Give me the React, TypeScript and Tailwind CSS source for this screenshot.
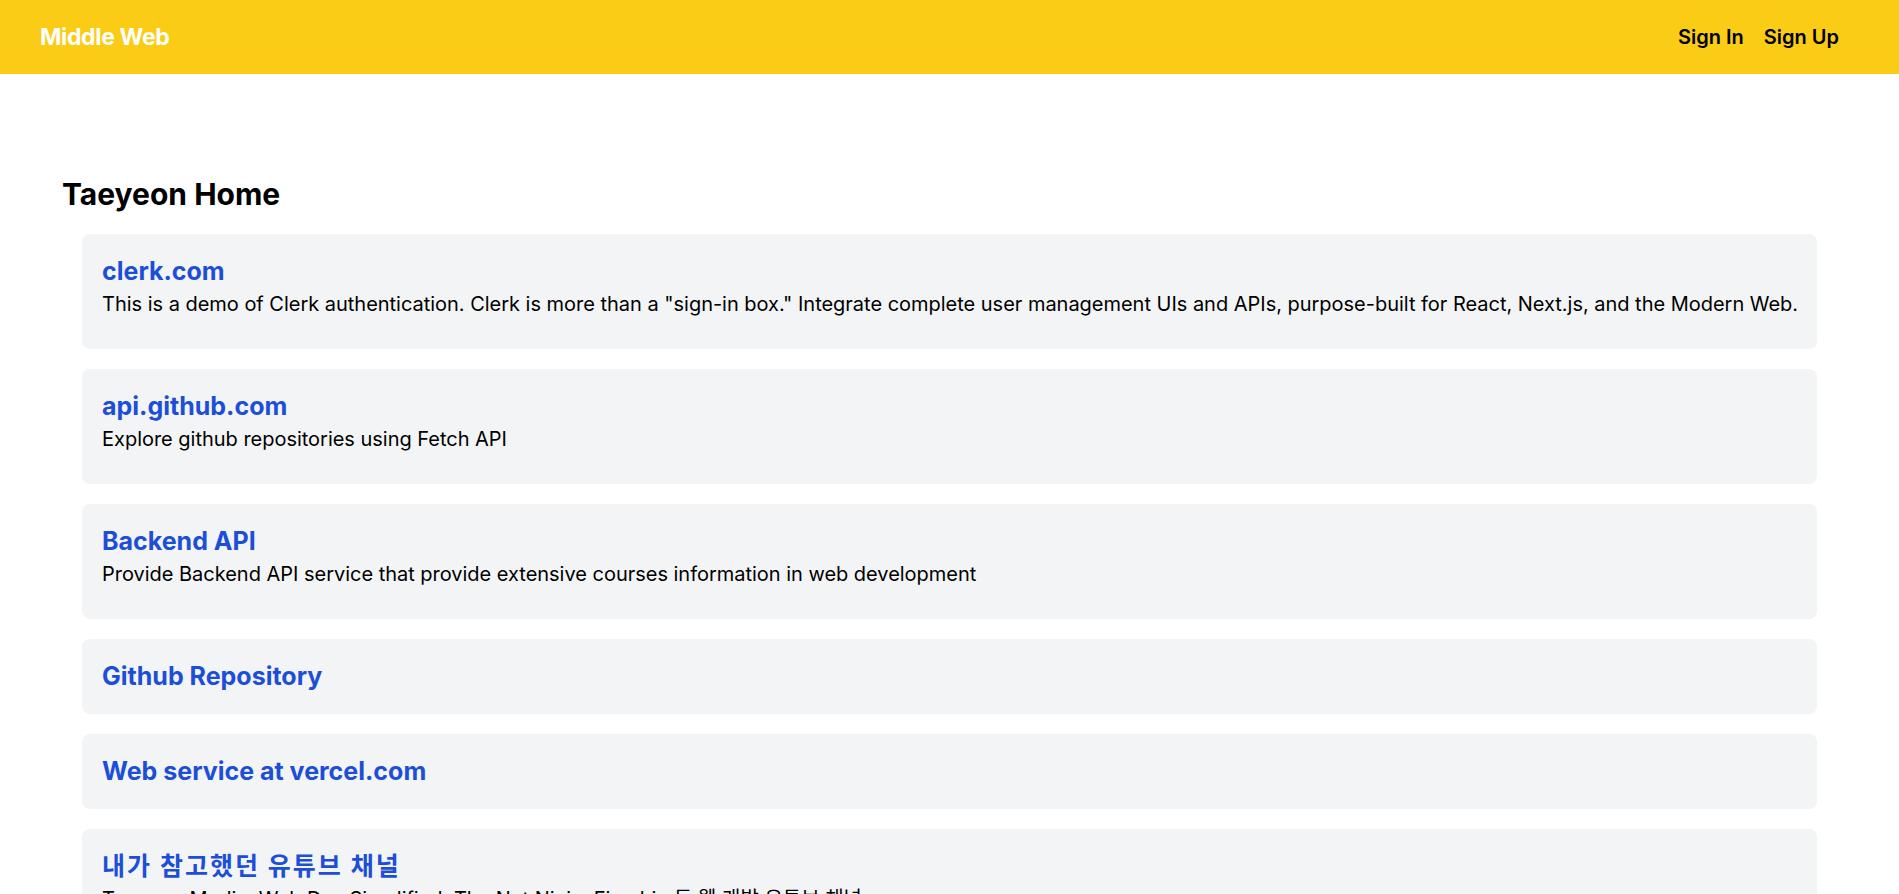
const LINKS = [
  {
    title: "clerk.com",
    desc: 'This is a demo of Clerk authentication. Clerk is more than a "sign-in box." Integrate complete user management UIs and APIs, purpose-built for React, Next.js, and the Modern Web.',
  },
  { title: "api.github.com", desc: "Explore github repositories using Fetch API" },
  {
    title: "Backend API",
    desc: "Provide Backend API service that provide extensive courses information in web development",
  },
  { title: "Github Repository" },
  { title: "Web service at vercel.com" },
  {
    title: "내가 참고했던 유튜브 채널",
    desc: "Traversy Media, Web Dev Simplified, The Net Ninja, Fireship 등 웹 개발 유튜브 채널",
    ko: true,
  },
];

export default function App() {
  return (
    <div className="min-h-screen bg-white font-['Inter','Noto_Sans_CJK_KR',sans-serif] text-black">
      <header className="flex h-[74px] items-center justify-between bg-[#facc15] pl-10 pr-[60px]">
        <a href="#" className="text-[23px] font-bold tracking-[-0.015em] text-white">
          Middle Web
        </a>
        <nav className="flex gap-5 text-xl font-semibold">
          <a href="#">Sign In</a>
          <a href="#">Sign Up</a>
        </nav>
      </header>

      <main className="pl-[62px] pr-16 pt-[102px] pb-10">
        <h1 className="text-3xl font-bold">Taeyeon Home</h1>

        <ul className="mt-[22px] flex flex-col gap-5 pl-5 pr-[18px]">
          {LINKS.map((l) => (
            <li
              key={l.title}
              className={
                l.desc
                  ? "rounded-lg bg-[#f3f4f6] pl-5 pr-4 pt-[21px] pb-[31px]"
                  : "rounded-lg bg-[#f3f4f6] pl-5 pr-4 pt-[21px] pb-[22px]"
              }
            >
              <a
                href="#"
                className={
                  l.ko
                    ? "block text-[25px] leading-8 font-bold tracking-[2px] text-[#1d4ed8]"
                    : "block text-[25px] leading-8 font-bold text-[#1d4ed8]"
                }
              >
                {l.title}
              </a>
              {l.desc && <p className="mt-[3px] text-xl tracking-[-0.02px]">{l.desc}</p>}
            </li>
          ))}
        </ul>
      </main>
    </div>
  );
}
